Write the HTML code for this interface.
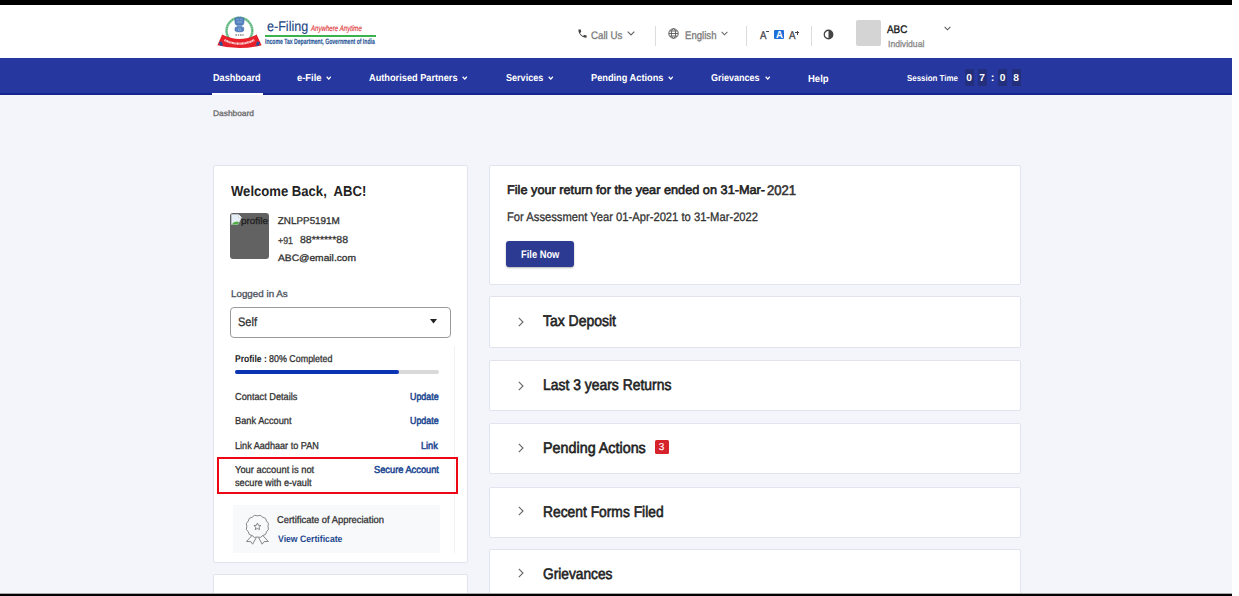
<!DOCTYPE html>
<html><head><meta charset="utf-8">
<style>
html,body{margin:0;padding:0;background:#fff;}
body{width:1239px;height:596px;overflow:hidden;position:relative;font-family:"Liberation Sans",sans-serif;text-rendering:geometricPrecision;}
#pg{position:absolute;left:0;top:0;width:1232px;height:596px;background:#f4f5fa;overflow:hidden;}
.a{position:absolute;}
.t{position:absolute;white-space:pre;line-height:1;transform-origin:0 0;}
.card{position:absolute;background:#fff;border:1px solid #e1e4ef;border-radius:2px;box-sizing:border-box;}
.sep{position:absolute;width:1px;background:#dcdcdc;}
.dg{position:absolute;top:69px;width:9px;height:16.5px;background:#232f7c;}
.dgt{position:absolute;top:73.8px;width:9px;text-align:center;color:#fff;font-weight:bold;font-size:10.2px;line-height:10px;}
.chev{position:absolute;}
</style></head><body>
<div id="pg">
  <!-- top black bar -->
  <div class="a" style="left:0;top:0;width:1232px;height:5px;background:#000"></div>
  <!-- header -->
  <div class="a" style="left:0;top:5px;width:1232px;height:53px;background:#fff"></div>
  <!-- nav -->
  <div class="a" style="left:0;top:58px;width:1232px;height:37px;background:#2637a0;border-bottom:2px solid #14258f;box-sizing:border-box"></div>
  <div class="a" style="left:212px;top:93px;width:51px;height:2px;background:#fff"></div>

  <!-- emblem -->
  <svg class="a" style="left:214px;top:12px" width="52" height="40" viewBox="0 0 52 40">
    <circle cx="25.4" cy="18.7" r="12.9" fill="none" stroke="#86cc9e" stroke-width="2.6"/>
    <circle cx="25.4" cy="18.7" r="12.9" fill="none" stroke="#3f9e63" stroke-width="1.2" stroke-dasharray="1 1.4"/>
    <path d="M20.8 8.5 Q20.6 5.6 23 5.6 Q24.2 4.6 25.4 5.4 Q26.8 4.6 27.9 5.6 Q30.3 5.6 30.1 8.5 L29.6 12.2 Q28.4 13.2 25.4 13.2 Q22.4 13.2 21.3 12.2Z" fill="#5683c2" stroke="#3a64a8" stroke-width="0.6"/>
    <path d="M22.6 7.5 q1 -1 2 0 M26.2 7.5 q1 -1 2 0 M23 10 h5" stroke="#a9c2e6" stroke-width="0.6" fill="none"/>
    <path d="M22.4 13.2 h6.2 l-.5 2.2 h-5.2z" fill="#6f97cc"/>
    <path d="M21.2 15.4 h8.4 l.2 3.2 q-.5 1.3 -4.4 1.3 q-3.9 0 -4.4 -1.3z" fill="#5683c2" stroke="#3a64a8" stroke-width="0.6"/>
    <circle cx="25.4" cy="17.6" r="1.2" fill="none" stroke="#b4c9e8" stroke-width="0.5"/>
    <path d="M21.4 23 h1.6 M23.8 23 h1.4 M26 23 h1.6 M28.3 23 h1.4" stroke="#555" stroke-width="1.1"/>
    <path d="M8.2 22.6 Q25.4 31.4 42.6 22.6 L47.6 33.2 Q25.4 39 3.4 33.2 Z" fill="#e8202a"/>
    <path d="M4.8 30.2 L7.6 29.4 L9.2 33.4 L6.2 33.8Z M46 30.2 L43.2 29.4 L41.6 33.4 L44.6 33.8Z" fill="#2a4f9c"/>
    <path d="M10.5 28 Q25.4 35.4 40.3 28" fill="none" stroke="#fff" stroke-width="2.2" stroke-dasharray="1.1 0.4 0.7 0.4" opacity="0.9"/>
  </svg>
  <div class="a" style="left:265px;top:35px;width:111px;height:2px;background:#3cb24e"></div>

  <!-- header right icons -->
  <svg class="a" style="left:577px;top:28px" width="11" height="11" viewBox="0 0 24 24"><path fill="#444" d="M6.6 10.8c1.4 2.8 3.8 5.1 6.6 6.6l2.2-2.2c.3-.3.7-.4 1-.2 1.1.4 2.3.6 3.6.6.6 0 1 .4 1 1V20c0 .6-.4 1-1 1C10.6 21 3 13.4 3 4c0-.6.4-1 1-1h3.5c.6 0 1 .4 1 1 0 1.3.2 2.5.6 3.6.1.3 0 .7-.2 1z"/></svg>
  <svg class="chev" style="left:627px;top:31px" width="8" height="5" viewBox="0 0 8 5"><path d="M0.7 0.7 L4 4 L7.3 0.7" fill="none" stroke="#666" stroke-width="1.2"/></svg>
  <div class="sep" style="left:655px;top:26px;height:20px"></div>
  <svg class="a" style="left:668px;top:28px" width="11" height="11" viewBox="0 0 22 22"><g fill="none" stroke="#555" stroke-width="1.8"><circle cx="11" cy="11" r="9.5"/><ellipse cx="11" cy="11" rx="4.2" ry="9.5"/><path d="M1.5 11h19M3 6h16M3 16h16"/></g></svg>
  <svg class="chev" style="left:721px;top:31px" width="7" height="5" viewBox="0 0 8 5"><path d="M0.7 0.7 L4 4 L7.3 0.7" fill="none" stroke="#666" stroke-width="1.2"/></svg>
  <div class="sep" style="left:746px;top:26px;height:20px"></div>
  <div class="a" style="left:774px;top:30px;width:10px;height:9px;background:#1e6fd9;border-radius:1px"></div>
  <div class="sep" style="left:811px;top:26px;height:20px"></div>
  <div class="a" style="left:766px;top:31px;width:3px;height:1px;background:#444"></div>
  <div class="a" style="left:795.3px;top:32.2px;width:4px;height:1.2px;background:#444"></div><div class="a" style="left:796.7px;top:30.8px;width:1.2px;height:4px;background:#444"></div>
  <svg class="a" style="left:823px;top:29px" width="11" height="11" viewBox="0 0 22 22"><circle cx="11" cy="11" r="8.5" fill="none" stroke="#444" stroke-width="2.6"/><path d="M11 2.5 A8.5 8.5 0 0 1 11 19.5Z" fill="#444"/></svg>
  <div class="a" style="left:856px;top:20px;width:25px;height:26px;background:#d4d4d4;border-radius:2px"></div>
  <svg class="chev" style="left:944px;top:26px" width="7" height="5" viewBox="0 0 8 5"><path d="M0.7 0.7 L4 4 L7.3 0.7" fill="none" stroke="#555" stroke-width="1.2"/></svg>

  <!-- nav chevrons -->
  <svg class="chev" style="left:325.7px;top:75.5px" width="5.5" height="4" viewBox="0 0 8 5.5"><path d="M1 1 L4 4.3 L7 1" fill="none" stroke="#fff" stroke-width="1.9"/></svg>
  <svg class="chev" style="left:462.2px;top:75.5px" width="5.5" height="4" viewBox="0 0 8 5.5"><path d="M1 1 L4 4.3 L7 1" fill="none" stroke="#fff" stroke-width="1.9"/></svg>
  <svg class="chev" style="left:548.2px;top:75.5px" width="5.5" height="4" viewBox="0 0 8 5.5"><path d="M1 1 L4 4.3 L7 1" fill="none" stroke="#fff" stroke-width="1.9"/></svg>
  <svg class="chev" style="left:667.7px;top:75.5px" width="5.5" height="4" viewBox="0 0 8 5.5"><path d="M1 1 L4 4.3 L7 1" fill="none" stroke="#fff" stroke-width="1.9"/></svg>
  <svg class="chev" style="left:764.7px;top:75.5px" width="5.5" height="4" viewBox="0 0 8 5.5"><path d="M1 1 L4 4.3 L7 1" fill="none" stroke="#fff" stroke-width="1.9"/></svg>

  <!-- session digits -->
  <div class="dg" style="left:964.5px"></div><div class="dgt" style="left:964.5px">0</div>
  <div class="dg" style="left:977.5px"></div><div class="dgt" style="left:977.5px">7</div>
  <div class="dgt" style="left:988px;font-size:11px;top:72.8px">:</div>
  <div class="dg" style="left:998px"></div><div class="dgt" style="left:998px">0</div>
  <div class="dg" style="left:1011.5px"></div><div class="dgt" style="left:1011.5px">8</div>

  <!-- left card -->
  <div class="card" style="left:213px;top:165px;width:255px;height:398px"></div>
  <div class="card" style="left:213px;top:574px;width:255px;height:40px"></div>
  <div class="a" style="left:230px;top:213px;width:39px;height:46px;background:#626262;border-radius:3px"></div>
  <svg class="a" style="left:230.5px;top:213.5px" width="11" height="11" viewBox="0 0 11 11"><path d="M0.5 0.5 H7.5 L10.5 3.5 L7 10.5 H0.5Z" fill="#e6eef8" stroke="#c9d3de" stroke-width="0.6"/><path d="M7.5 0.5 V3.5 H10.5" fill="#fff" stroke="#bbb" stroke-width="0.5"/><path d="M0.5 10.5 Q4 6 8.2 8.2 L7 10.5Z" fill="#52ad45"/></svg>
  <div class="card" style="left:230px;top:307px;width:221px;height:31px;border-color:#9a9a9a;border-radius:4px"></div>
  <svg class="a" style="left:430px;top:319px" width="7" height="5" viewBox="0 0 7 5"><path d="M0 0H7L3.5 4.5Z" fill="#222"/></svg>
  <div class="a" style="left:235px;top:370px;width:204px;height:4px;background:#d9d9d9;border-radius:2px"></div>
  <div class="a" style="left:235px;top:370px;width:164px;height:4px;background:#0a34b4;border-radius:2px"></div>
  <div class="a" style="left:454px;top:346px;width:1px;height:207px;background:#f0f1f4"></div>
  <div class="a" style="left:217px;top:457px;width:241px;height:37px;border:2.6px solid #ec0714;box-sizing:border-box"></div>
  <div class="a" style="left:233px;top:505px;width:207px;height:48px;background:#f8f9fb"></div>
  <svg class="a" style="left:244px;top:513px" width="28" height="32" viewBox="0 0 28 32">
    <g fill="none" stroke="#7a7a7a" stroke-width="0.9" stroke-linejoin="round">
      <path d="M13.40 2.80 Q16.66 1.23 18.70 4.22 Q22.31 4.49 22.58 8.10 Q25.57 10.14 24.00 13.40 Q25.57 16.66 22.58 18.70 Q22.31 22.31 18.70 22.58 Q16.66 25.57 13.40 24.00 Q10.14 25.57 8.10 22.58 Q4.49 22.31 4.22 18.70 Q1.23 16.66 2.80 13.40 Q1.23 10.14 4.22 8.10 Q4.49 4.49 8.10 4.22 Q10.14 1.23 13.40 2.80Z"/>
      <path d="M13.40 10.00 L14.40 12.32 L16.92 12.56 L15.02 14.23 L15.57 16.69 L13.40 15.40 L11.23 16.69 L11.78 14.23 L9.88 12.56 L12.40 12.32 Z"/>
      <path d="M8 22.5 L2.5 28.5 L6.8 28.6 L8.6 31.2 L12.3 24.5"/>
      <path d="M18.8 22.5 L24.3 28.5 L20 28.6 L18.2 31.2 L14.5 24.5"/>
    </g>
  </svg>

  <!-- right cards -->
  <div class="card" style="left:489px;top:165px;width:532px;height:120px"></div>
  <div class="card" style="left:489px;top:296px;width:532px;height:52px"></div>
  <div class="card" style="left:489px;top:360px;width:532px;height:51px"></div>
  <div class="card" style="left:489px;top:423px;width:532px;height:51px"></div>
  <div class="card" style="left:489px;top:487px;width:532px;height:51px"></div>
  <div class="card" style="left:489px;top:549px;width:532px;height:60px"></div>
  <div class="a" style="left:506px;top:241px;width:68px;height:26px;background:#2c3a92;border-radius:3px;box-shadow:0 1px 2px rgba(0,0,0,.3)"></div>
  <svg class="chev" style="left:518px;top:317px" width="6" height="10" viewBox="0 0 6 10"><path d="M0.8 0.8 L5 5 L0.8 9.2" fill="none" stroke="#666" stroke-width="1.1"/></svg>
  <svg class="chev" style="left:518px;top:381px" width="6" height="10" viewBox="0 0 6 10"><path d="M0.8 0.8 L5 5 L0.8 9.2" fill="none" stroke="#666" stroke-width="1.1"/></svg>
  <svg class="chev" style="left:518px;top:443px" width="6" height="10" viewBox="0 0 6 10"><path d="M0.8 0.8 L5 5 L0.8 9.2" fill="none" stroke="#666" stroke-width="1.1"/></svg>
  <svg class="chev" style="left:518px;top:506px" width="6" height="10" viewBox="0 0 6 10"><path d="M0.8 0.8 L5 5 L0.8 9.2" fill="none" stroke="#666" stroke-width="1.1"/></svg>
  <svg class="chev" style="left:518px;top:568px" width="6" height="10" viewBox="0 0 6 10"><path d="M0.8 0.8 L5 5 L0.8 9.2" fill="none" stroke="#666" stroke-width="1.1"/></svg>
  <div class="a" style="left:654.5px;top:440px;width:14px;height:14px;background:#d5222b;border-radius:1.5px"></div>
  <div class="tt" style="position:absolute;line-height:14px;left:654.5px;top:440.5px;width:14px;height:14px;text-align:center;color:#fff;font-size:10px;-webkit-text-stroke:0.15px #fff">3</div>

  <div class="t" style="left:266.80px;top:19.41px;font-size:14.10px;color:#1e4785;-webkit-text-stroke:0.15px #1e4785;transform:scaleX(0.8912);">e-Filing</div>
<div class="t" style="left:310.81px;top:25.41px;font-size:8.14px;color:#e23a40;font-style:italic;-webkit-text-stroke:0.2px #e23a40;transform:scaleX(0.7533);">Anywhere Anytime</div>
<div class="t" style="left:265.30px;top:37.60px;font-size:7.70px;color:#2a5898;font-weight:bold;transform:scaleX(0.6627);-webkit-text-stroke:0.15px #2a5898;">Income Tax Department, Government of India</div>
<div class="t" style="left:590.60px;top:30.60px;font-size:10.90px;color:#7a7a7a;-webkit-text-stroke:0.3px #7a7a7a;transform:scaleX(0.8909);">Call Us</div>
<div class="t" style="left:684.50px;top:30.60px;font-size:10.90px;color:#7a7a7a;-webkit-text-stroke:0.3px #7a7a7a;transform:scaleX(0.8810);">English</div>
<div class="t" style="left:887.40px;top:24.60px;font-size:11.05px;color:#111;-webkit-text-stroke:0.3px #111;transform:scaleX(0.8982);">ABC</div>
<div class="t" style="left:888.30px;top:39.90px;font-size:9.01px;color:#8a8a8a;-webkit-text-stroke:0.3px #8a8a8a;transform:scaleX(0.9560);">Individual</div>
<div class="t" style="left:759.50px;top:30.90px;font-size:11.34px;color:#444;-webkit-text-stroke:0.3px #444;transform:scaleX(0.8596);">A</div>
<div class="t" style="left:775.50px;top:31.01px;font-size:10.17px;color:#fff;font-weight:bold;transform:scaleX(0.9529);">A</div>
<div class="t" style="left:788.80px;top:30.90px;font-size:11.34px;color:#444;-webkit-text-stroke:0.3px #444;transform:scaleX(0.8596);">A</div>
<div class="t" style="left:241.00px;top:216.61px;font-size:9.45px;color:#222;-webkit-text-stroke:0.3px #222;transform:scaleX(1.0491);">profile</div>
<div class="t" style="left:212.80px;top:74.01px;font-size:10.03px;color:#fff;font-weight:bold;transform:scaleX(0.9106);">Dashboard</div>
<div class="t" style="left:297.00px;top:74.01px;font-size:10.03px;color:#fff;font-weight:bold;transform:scaleX(0.9353);">e-File</div>
<div class="t" style="left:369.30px;top:74.01px;font-size:10.03px;color:#fff;font-weight:bold;transform:scaleX(0.9200);">Authorised Partners</div>
<div class="t" style="left:505.60px;top:74.01px;font-size:10.03px;color:#fff;font-weight:bold;transform:scaleX(0.9038);">Services</div>
<div class="t" style="left:591.00px;top:74.01px;font-size:10.03px;color:#fff;font-weight:bold;transform:scaleX(0.9207);">Pending Actions</div>
<div class="t" style="left:711.40px;top:74.01px;font-size:10.03px;color:#fff;font-weight:bold;transform:scaleX(0.8986);">Grievances</div>
<div class="t" style="left:807.80px;top:75.01px;font-size:10.03px;color:#fff;font-weight:bold;transform:scaleX(0.9479);">Help</div>
<div class="t" style="left:907.30px;top:73.60px;font-size:8.72px;color:#fff;font-weight:bold;transform:scaleX(0.9078);">Session Time</div>
<div class="t" style="left:212.70px;top:110.00px;font-size:8.14px;color:#6a6a6a;-webkit-text-stroke:0.3px #6a6a6a;transform:scaleX(1.0297);">Dashboard</div>
<div class="t" style="left:230.80px;top:185.10px;font-size:14.39px;color:#222;font-weight:bold;transform:scaleX(0.9104);">Welcome Back,  ABC!</div>
<div class="t" style="left:277.80px;top:217.21px;font-size:9.88px;color:#333;-webkit-text-stroke:0.3px #333;">ZNLPP5191M</div>
<div class="t" style="left:278.00px;top:236.81px;font-size:10.17px;color:#444;-webkit-text-stroke:0.3px #444;transform:scaleX(0.8693);">+91</div>
<div class="t" style="left:299.60px;top:236.01px;font-size:10.17px;color:#333;-webkit-text-stroke:0.3px #333;transform:scaleX(1.0367);">88******88</div>
<div class="t" style="left:277.80px;top:253.81px;font-size:9.30px;color:#333;-webkit-text-stroke:0.3px #333;transform:scaleX(1.1006);">ABC@email.com</div>
<div class="t" style="left:230.70px;top:289.81px;font-size:9.45px;color:#4d5260;-webkit-text-stroke:0.3px #4d5260;transform:scaleX(1.0396);">Logged in As</div>
<div class="t" style="left:237.90px;top:315.80px;font-size:12.35px;color:#333;-webkit-text-stroke:0.3px #333;transform:scaleX(0.8915);">Self</div>
<div class="t" style="left:235.10px;top:354.60px;font-size:9.88px;color:#222;font-weight:bold;transform:scaleX(0.8642);">Profile :</div>
<div class="t" style="left:269.30px;top:354.60px;font-size:9.88px;color:#333;-webkit-text-stroke:0.3px #333;transform:scaleX(0.9030);">80% Completed</div>
<div class="t" style="left:235.10px;top:392.90px;font-size:10.03px;color:#333;-webkit-text-stroke:0.3px #333;transform:scaleX(0.9190);">Contact Details</div>
<div class="t" style="left:410.30px;top:392.90px;font-size:10.03px;color:#1f4b93;-webkit-text-stroke:0.55px #1f4b93;transform:scaleX(0.8873);">Update</div>
<div class="t" style="left:235.10px;top:417.01px;font-size:10.03px;color:#333;-webkit-text-stroke:0.3px #333;transform:scaleX(0.9229);">Bank Account</div>
<div class="t" style="left:410.30px;top:417.01px;font-size:10.03px;color:#1f4b93;-webkit-text-stroke:0.55px #1f4b93;transform:scaleX(0.8873);">Update</div>
<div class="t" style="left:235.10px;top:441.60px;font-size:10.03px;color:#333;-webkit-text-stroke:0.3px #333;transform:scaleX(0.9083);">Link Aadhaar to PAN</div>
<div class="t" style="left:420.80px;top:441.60px;font-size:10.03px;color:#1f4b93;-webkit-text-stroke:0.55px #1f4b93;transform:scaleX(0.9124);">Link</div>
<div class="t" style="left:235.10px;top:465.81px;font-size:10.03px;color:#333;-webkit-text-stroke:0.3px #333;transform:scaleX(0.9336);">Your account is not</div>
<div class="t" style="left:235.10px;top:479.01px;font-size:10.03px;color:#333;-webkit-text-stroke:0.3px #333;transform:scaleX(0.9161);">secure with e-vault</div>
<div class="t" style="left:374.00px;top:465.81px;font-size:10.03px;color:#1f4b93;-webkit-text-stroke:0.55px #1f4b93;transform:scaleX(0.9254);">Secure Account</div>
<div class="t" style="left:277.00px;top:516.30px;font-size:9.88px;color:#333;-webkit-text-stroke:0.3px #333;transform:scaleX(0.9501);">Certificate of Appreciation</div>
<div class="t" style="left:277.50px;top:535.00px;font-size:9.45px;color:#1d4890;font-weight:bold;transform:scaleX(0.9190);">View Certificate</div>
<div class="t" style="left:506.90px;top:183.81px;font-size:12.50px;color:#222;-webkit-text-stroke:0.6px #222;transform:scaleX(1.0177);">File your return for the year ended on 31-Mar-</div>
<div class="t" style="left:766.90px;top:183.81px;font-size:13.95px;color:#333;-webkit-text-stroke:0.6px #333;transform:scaleX(0.9373);">2021</div>
<div class="t" style="left:507.00px;top:211.41px;font-size:12.35px;color:#333;-webkit-text-stroke:0.3px #333;transform:scaleX(0.9080);">For Assessment Year 01-Apr-2021 to 31-Mar-2022</div>
<div class="t" style="left:521.20px;top:250.01px;font-size:11.05px;color:#fff;font-weight:bold;transform:scaleX(0.8450);">File Now</div>
<div class="t" style="left:543.00px;top:314.20px;font-size:15.41px;color:#222;-webkit-text-stroke:0.6px #222;transform:scaleX(0.9068);">Tax Deposit</div>
<div class="t" style="left:543.00px;top:378.31px;font-size:15.41px;color:#222;-webkit-text-stroke:0.6px #222;transform:scaleX(0.9032);">Last 3 years Returns</div>
<div class="t" style="left:542.80px;top:440.61px;font-size:15.41px;color:#222;-webkit-text-stroke:0.6px #222;transform:scaleX(0.9303);">Pending Actions</div>
<div class="t" style="left:542.80px;top:504.61px;font-size:15.41px;color:#222;-webkit-text-stroke:0.6px #222;transform:scaleX(0.8971);">Recent Forms Filed</div>
<div class="t" style="left:542.80px;top:566.61px;font-size:15.41px;color:#222;-webkit-text-stroke:0.6px #222;transform:scaleX(0.8918);">Grievances</div>


  <!-- bottom black bar -->
  <div class="a" style="left:0;top:593px;width:1232px;height:1px;background:#aaa"></div><div class="a" style="left:0;top:594px;width:1232px;height:2px;background:#000"></div>
</div>
</body></html>
